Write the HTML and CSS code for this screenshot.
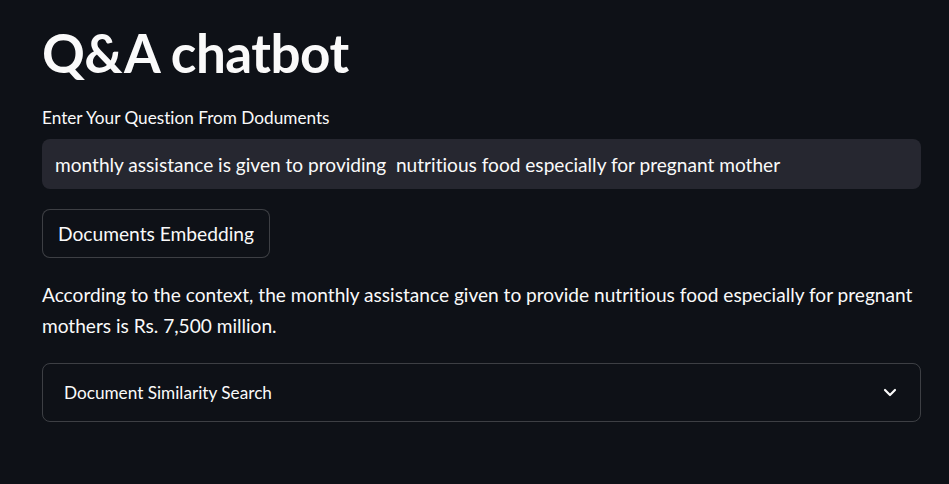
FILE: index.html
```html
<!DOCTYPE html>
<html lang="en">
<head>
<meta charset="utf-8">
<title>Q&amp;A chatbot</title>
<link rel="stylesheet" href="styles.css">
</head>
<body>
<main class="main">
  <h1 class="title">Q&amp;A chatbot</h1>
  <label class="label" for="q">Enter Your Question From Doduments</label>
  <div class="input" id="q">monthly assistance is given to providing&nbsp; nutritious food especially for pregnant mother</div>
  <div class="btn-row"><button class="btn">Documents Embedding</button></div>
  <p class="answer">According to the context, the monthly assistance given to provide nutritious food especially for pregnant mothers is Rs. 7,500 million.</p>
  <div class="expander">
    <span class="exp-title">Document Similarity Search</span>
    <svg class="chevron" width="14" height="9" viewBox="0 0 14 9" aria-hidden="true"><path d="M2 2 L7 7 L12 2" fill="none" stroke="#fafafa" stroke-width="2.2" stroke-linecap="round" stroke-linejoin="round"/></svg>
  </div>
</main>
</body>
</html>
```
FILE: styles.css
```css
html, body {
  margin: 0;
  padding: 0;
  background: #0e1117;
  color: #fafafa;
  font-family: Lato, "Liberation Sans", sans-serif;
  font-variant-ligatures: none;
}
.main {
  display: flex;
  flex-direction: column;
  padding: 22px 28px 0 42px;
}
.title {
  margin: 0;
  font-size: 53px;
  line-height: 62px;
  font-weight: 700;
  letter-spacing: -0.5px;
}
.label {
  margin-top: 24px;
  font-size: 17.2px;
  line-height: 20px;
}
.input {
  margin-top: 11px;
  height: 50px;
  box-sizing: border-box;
  background: #262730;
  border-radius: 8px;
  padding: 0 13px;
  display: flex;
  align-items: center;
  font-size: 19.1px;
  white-space: nowrap;
}
.btn-row {
  display: flex;
  margin-top: 20px;
}
.btn {
  height: 49px;
  width: 228px;
  box-sizing: border-box;
  background: #0e1117;
  color: #fafafa;
  border: 1px solid rgba(250, 250, 250, 0.2);
  border-radius: 8px;
  font-family: inherit;
  font-variant-ligatures: none;
  font-size: 19.2px;
  padding: 0 12px;
}
.answer {
  margin: 21px 0 0;
  font-size: 19.1px;
  line-height: 31px;
}
.expander {
  margin-top: 22px;
  height: 59px;
  box-sizing: border-box;
  border: 1px solid rgba(250, 250, 250, 0.2);
  border-radius: 8px;
  display: flex;
  align-items: center;
  justify-content: space-between;
  padding: 0 23px 0 21px;
}
.exp-title {
  font-size: 17.2px;
}
.chevron {
  display: block;
}
```
